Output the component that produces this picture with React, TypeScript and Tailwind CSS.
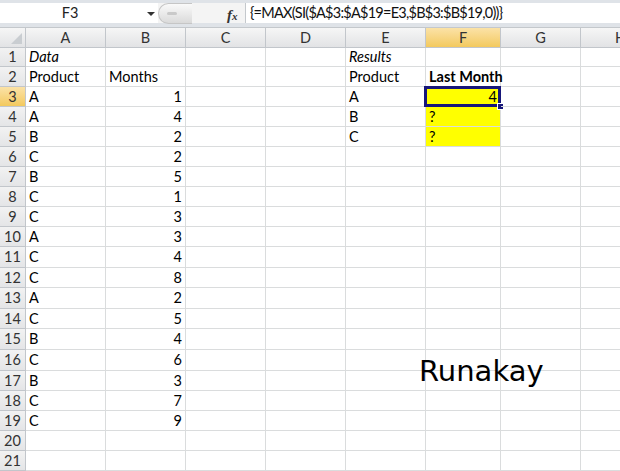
import React from "react";

type Cell = { text?: string; align?: "l" | "r"; italic?: boolean; bold?: boolean; yellow?: boolean; selected?: boolean };

const cols = ["A", "B", "C", "D", "E", "F", "G", "H"];
const widths = ["w-[80px]", "w-[80px]", "w-[80px]", "w-[80px]", "w-[80px]", "w-[75px]", "w-[80px]", "w-[80px]"];

const data: [string, string][] = [
  ["A", "1"], ["A", "4"], ["B", "2"], ["C", "2"], ["B", "5"], ["C", "1"], ["C", "3"], ["A", "3"],
  ["C", "4"], ["C", "8"], ["A", "2"], ["C", "5"], ["B", "4"], ["C", "6"], ["B", "3"], ["C", "7"], ["C", "9"],
];

function buildRows(): Cell[][] {
  const rows: Cell[][] = [];
  for (let r = 1; r <= 21; r++) {
    const row: Cell[] = cols.map(() => ({}));
    if (r === 1) {
      row[0] = { text: "Data", italic: true };
      row[4] = { text: "Results", italic: true };
    } else if (r === 2) {
      row[0] = { text: "Product" };
      row[1] = { text: "Months" };
      row[4] = { text: "Product" };
      row[5] = { text: "Last Month", bold: true };
    } else if (r >= 3 && r <= 19) {
      const d = data[r - 3];
      row[0] = { text: d[0] };
      row[1] = { text: d[1], align: "r" };
    }
    if (r === 3) {
      row[4] = { text: "A" };
      row[5] = { text: "4", align: "r", yellow: true, selected: true };
    }
    if (r === 4) {
      row[4] = { text: "B" };
      row[5] = { text: "?", yellow: true };
    }
    if (r === 5) {
      row[4] = { text: "C" };
      row[5] = { text: "?", yellow: true };
    }
    rows.push(row);
  }
  return rows;
}

const rowHeight = (r: number) => {
  if (r === 1) return "h-[19px]";
  if (r === 11 || r === 13 || r === 15 || r === 16) return "h-[21px]";
  return "h-[20px]";
};

export default function App() {
  const rows = buildRows();
  return (
    <div
      className="relative w-[620px] h-[471px] overflow-hidden bg-white text-[14.5px] text-black"
      style={{ fontFamily: "Lato, 'Open Sans', sans-serif" }}
    >
      {/* Formula bar */}
      <div className="h-[28px] bg-[#dfe3e8] pt-[3px] pb-[4px] flex border-b border-[#c4c8cc]">
        <div className="w-[158px] bg-white relative flex items-center">
          <span className="w-[140px] text-center text-[14.5px] text-[#222]">F3</span>
          <span className="absolute left-[147px] top-[9px] w-0 h-0 border-l-[4px] border-r-[4px] border-t-[4px] border-l-transparent border-r-transparent border-t-[#333]" />
        </div>
        <div className="w-[87px] bg-[#f4f4f4] flex items-center relative">
          <div className="h-[21px] w-[34px] rounded-l-full border border-[#c6c6c6] border-r-0 bg-gradient-to-b from-[#fafafa] to-[#dadada] flex items-center pl-[8px]">
            <div className="w-[10px] h-[3px] rounded-full bg-[#c9c9c9]" />
          </div>
          <span
            className="absolute left-[69px] top-[1px] italic font-bold text-[15px] text-[#333]"
            style={{ fontFamily: "'Liberation Serif', serif" }}
          >
            f<span className="text-[11px]">x</span>
          </span>
        </div>
        <div className="flex-1 bg-white border-l border-[#c4c8cc] flex items-center pl-[4px] text-[14.5px] tracking-[-0.75px] text-[#111] whitespace-nowrap">
          {"{=MAX(SI($A$3:$A$19=E3,$B$3:$B$19,0))}"}
        </div>
      </div>

      {/* Column headers */}
      <div className="flex h-[20px] bg-gradient-to-b from-[#f6f6f6] to-[#e2e3e5] border-b border-[#c2c6cb] text-[#333]">
        <div className="w-[26px] shrink-0 border-r border-[#c2c6cb] relative">
          <div className="absolute right-[3px] bottom-[3px] w-[11px] h-[11px] bg-[#c9cdd1] [clip-path:polygon(100%_0,100%_100%,0_100%)]" />
        </div>
        {cols.map((c, i) => (
          <div
            key={c}
            className={`${widths[i]} shrink-0 border-r border-[#c2c6cb] flex items-center justify-center ${
              c === "F" ? "bg-gradient-to-b from-[#fbe2a6] to-[#f3c95c]" : ""
            }`}
          >
            {c}
          </div>
        ))}
      </div>

      {/* Rows */}
      {rows.map((row, ri) => {
        const r = ri + 1;
        return (
          <div key={r} className={`flex ${rowHeight(r)} ${r === 3 ? "relative z-10" : ""}`}>
            <div
              className={`w-[26px] shrink-0 border-r border-b border-[#c2c6cb] flex items-center justify-center text-[#333] ${
                r === 3 ? "bg-gradient-to-b from-[#fbe2a6] to-[#f3c95c]" : "bg-gradient-to-b from-[#f2f2f2] to-[#e4e5e7]"
              }`}
            >
              {r}
            </div>
            {row.map((cell, ci) => (
              <div
                key={ci}
                className={`${widths[ci]} shrink-0 relative border-r border-b border-[#dadcdd] flex items-center px-[3px] whitespace-nowrap ${
                  cell.align === "r" ? "justify-end" : "justify-start"
                } ${cell.yellow ? "bg-[#ffff00]" : ""} ${cell.italic ? "italic" : ""} ${cell.bold ? "font-bold" : ""}`}
              >
                {cell.text}
                {cell.selected && (
                  <>
                    <div className="absolute -left-[2px] -top-[1px] -right-[1px] -bottom-[1px] border-[3px] border-[#17177a]" />
                    <div className="absolute -right-[4px] -bottom-[4px] w-[7px] h-[7px] bg-[#17177a] border border-white" />
                  </>
                )}
              </div>
            ))}
          </div>
        );
      })}

      {/* Watermark */}
      <div
        className="absolute left-[419px] top-[350px] z-20 text-[29px] text-black"
        style={{ fontFamily: "'DejaVu Sans', sans-serif" }}
      >
        Runakay
      </div>
    </div>
  );
}
